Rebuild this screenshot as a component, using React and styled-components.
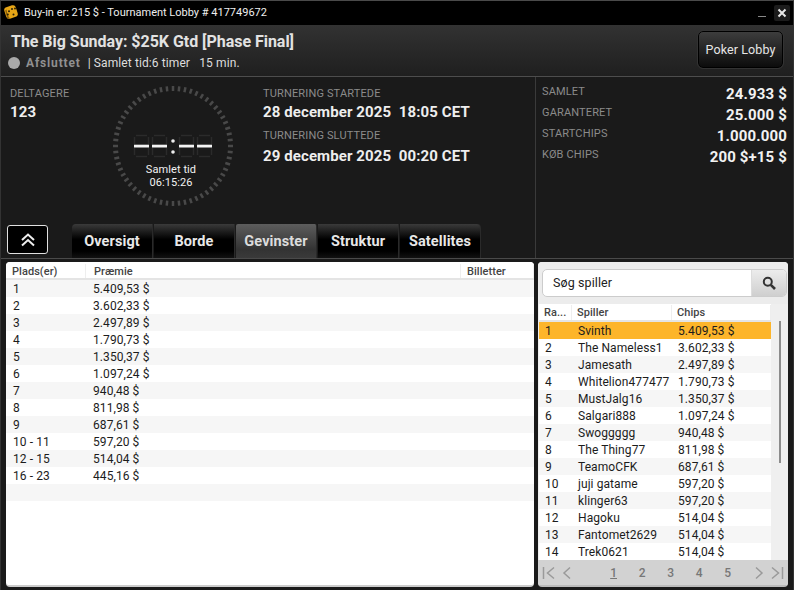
import React from 'react';
import styled, { createGlobalStyle } from 'styled-components';

const Global = createGlobalStyle`
  html, body { margin: 0; padding: 0; background: #1a1a1a; }
  body { font-family: Roboto, "Liberation Sans", sans-serif; }
  * { box-sizing: border-box; }
`;

const Win = styled.div`
  width: 794px; height: 590px; overflow: hidden; display: flex; flex-direction: column;
  background: #1a1a1a; border-top: 1px solid #4a4a4a; border-left: 1px solid #333; border-right: 1px solid #333;
`;
const TitleBar = styled.div`
  height: 24px; background: #000; display: flex; align-items: center; padding: 0 3px 2px 2px; flex: none;
`;
const TitleText = styled.div`
  color: #eee; font-size: 11px; margin-left: 5px; flex: 1;
`;
const MinBtn = styled.div`
  width: 8px; height: 1px; background: #888; margin-right: 8px; margin-top: 8px;
`;
const CloseBtn = styled.div`
  width: 16px; height: 16px; margin-top: 2px; background: #1c1c1c; border-radius: 2px; display: flex; align-items: center; justify-content: center;
`;
const Header = styled.div`
  height: 52px; flex: none; display: flex; justify-content: space-between; padding: 6px 10px 0 7px;
  background: linear-gradient(#323232, #1f1f1f); border-bottom: 1px solid #4d4d4d;
`;
const HeadLeft = styled.div`
  padding-top: 1px;
`;
const HeadTitle = styled.div`
  color: #e2e2e2; font-size: 16px; font-weight: 700; line-height: 19px; letter-spacing: -0.03px; margin-left: 3px;
`;
const HeadSub = styled.div`
  display: flex; align-items: center; height: 16px; margin-top: 4px; color: #ddd; font-size: 12px; letter-spacing: 0.1px; white-space: pre;
`;
const StatusDot = styled.span`
  width: 12px; height: 12px; border-radius: 50%; background: #a9a9a9; margin-right: 6px;
`;
const StatusText = styled.span`
  color: #909090; font-weight: 700; letter-spacing: 0.85px; margin-right: 7px;
`;
const LobbyBtn = styled.div`
  width: 85px; height: 37px; border-radius: 5px; border: 1px solid #000; outline: 1px solid #333;
  background: linear-gradient(#3d3d3d, #0c0c0c); color: #e6e6e6; font-size: 12.5px; letter-spacing: 0.1px;
  display: flex; align-items: center; justify-content: center;
`;
const Info = styled.div`
  height: 182px; flex: none; display: flex; border-bottom: 1px solid #4a4a4a;
`;
const InfoLeft = styled.div`
  width: 535px; display: flex; flex-direction: column; border-right: 1px solid #3a3a3a; justify-content: space-between;
`;
const InfoTop = styled.div`
  display: flex; padding: 7px 0 0 9px;
`;
const Participants = styled.div`
  width: 102px; padding-top: 2px;
`;
const Label = styled.div`
  color: #8b8b8b; font-size: 11px; line-height: 15px; letter-spacing: 0.15px; white-space: nowrap;
`;
const TotalLabel = styled(Label)`
  margin-top: 1px;
`;
const BigValue = styled.div`
  color: #eee; font-size: 15px; font-weight: 700; line-height: 20px; margin-top: ${p => p.$mt ?? 1}px; white-space: pre; letter-spacing: 0.1px;
`;
const ClockBox = styled.div`
  position: relative; width: 122px; height: 122px; margin-top: 1px;
`;
const ClockLabel = styled.div`
  position: absolute; left: 0; right: 4px; top: 78px; text-align: center; color: #f2f2f2; font-size: 11px; line-height: 13px; letter-spacing: 0.08px;
`;
const Dates = styled.div`
  margin-left: 29px; padding-top: 2px;
`;
const DateBlock = styled.div`
  margin-bottom: 6px;
`;
const TabRow = styled.div`
  display: flex; align-items: flex-end; padding-left: 6px; height: 34px;
`;
const Toggle = styled.div`
  width: 41px; height: 29px; margin-bottom: 4px; margin-right: 24px; border: 1px solid #e0e0e0; border-radius: 3px; background: #000;
  display: flex; align-items: center; justify-content: center;
`;
const Tabs = styled.div`
  display: flex; gap: 1px;
`;
const Tab = styled.div`
  width: ${p => p.$w}px; height: 34px; border-radius: ${p => p.$r || '4px 0 0 0'};
  background: ${p => p.$active ? 'linear-gradient(#5d5d5d, #333 75%, #3a3a3a)' : 'linear-gradient(#3a3a3a, #000 45%, #000 80%, #111)'};
  color: ${p => p.$active ? '#dcdcdc' : '#e8e8e8'}; font-size: 14.5px; font-weight: 700; letter-spacing: 0.1px;
  display: flex; align-items: center; justify-content: center; border-right: 1px solid #2a2a2a;
`;
const Totals = styled.div`
  flex: 1; padding: 6px 6px 0 6px; display: flex; flex-direction: column;
`;
const TotalRow = styled.div`
  display: flex; justify-content: space-between; height: 21px; align-items: flex-start;
`;
const TotalValue = styled.div`
  color: #f2f2f2; font-size: 15px; font-weight: 700; line-height: 20px; margin-top: 1px; letter-spacing: 0.15px;
`;
const Content = styled.div`
  flex: 1; display: flex; gap: 4px; padding: 3px 5px 3px 5px; min-height: 0;
`;
const LeftPanel = styled.div`
  width: 528px; background: #fff; border-radius: 4px; border-bottom: 2px solid #ccc; overflow: hidden;
`;
const RightPanel = styled.div`
  width: 250px; background: #efefef; border-radius: 4px; display: flex; flex-direction: column; overflow: hidden; border-bottom: 2px solid #bbb;
`;
const HeadRow = styled.div`
  display: flex; height: 18px; padding-top: ${p => p.$top ?? 1}px; background: #fff; border-bottom: 2px solid #e4e4e4; font-size: 11px; font-weight: 500; color: #444; letter-spacing: 0.05px;
`;
const HeadCell = styled.div`
  width: ${p => p.$w}px; ${p => p.$grow ? 'flex: 1;' : ''} padding-left: ${p => p.$pad || 6}px; line-height: 15px; border-right: 1px solid #eee;
  white-space: nowrap; overflow: hidden;
`;
const Row = styled.div`
  display: flex; height: 17px; align-items: center; font-size: 12px; color: #1c1c1c; letter-spacing: 0.08px;
  background: ${p => p.$active ? '#fdb52a' : p.$alt ? '#f6f6f6' : '#fff'};
`;
const Cell = styled.div`
  width: ${p => p.$w}px; padding-left: ${p => p.$pad || 7}px; white-space: nowrap;
`;
const SearchArea = styled.div`
  height: 42px; flex: none; padding: 7px 1px 0 4px; background: #ececec;
`;
const SearchBox = styled.div`
  height: 28px; display: flex; background: #fff; border: 1px solid #ccc; border-radius: 5px; overflow: hidden;
`;
const SearchInput = styled.div`
  flex: 1; font-size: 12.5px; color: #222; padding-left: 10px; line-height: 26px; letter-spacing: 0.1px;
`;
const SearchBtn = styled.div`
  width: 35px; background: linear-gradient(#ececec, #cfcfcf); border-left: 1px solid #ddd; display: flex; align-items: center; justify-content: center;
`;
const ListWrap = styled.div`
  flex: 1; display: flex; min-height: 0;
`;
const List = styled.div`
  width: 232px; margin-left: 1px; overflow: hidden;
`;
const ScrollCol = styled.div`
  flex: 1; padding: 17px 0 0 8px;
`;
const Thumb = styled.div`
  width: 2px; height: 142px; background: #8c8c8c;
`;
const Pager = styled.div`
  height: 25px; flex: none; background: #d2d2d2; display: flex; align-items: center; padding: 0 4px;
`;
const PagerIcons = styled.div`
  display: flex; gap: 6px; width: ${p => p.$w}px; justify-content: ${p => p.$end ? 'flex-end' : 'flex-start'};
`;
const Pages = styled.div`
  flex: 1; display: flex; padding-left: 35px;
`;
const PageNum = styled.span`
  width: 28.5px; font-size: 12px; font-weight: 500; color: #777; text-decoration: ${p => p.$on ? 'underline' : 'none'};
`;

const prizes = [['1','5.409,53 $'],['2','3.602,33 $'],['3','2.497,89 $'],['4','1.790,73 $'],['5','1.350,37 $'],['6','1.097,24 $'],['7','940,48 $'],['8','811,98 $'],['9','687,61 $'],['10 - 11','597,20 $'],['12 - 15','514,04 $'],['16 - 23','445,16 $'],['','']];
const players = [['1','Svinth','5.409,53 $'],['2','The Nameless1','3.602,33 $'],['3','Jamesath','2.497,89 $'],['4','Whitelion477477','1.790,73 $'],['5','MustJalg16','1.350,37 $'],['6','Salgari888','1.097,24 $'],['7','Swoggggg','940,48 $'],['8','The Thing77','811,98 $'],['9','TeamoCFK','687,61 $'],['10','juji gatame','597,20 $'],['11','klinger63','597,20 $'],['12','Hagoku','514,04 $'],['13','Fantomet2629','514,04 $'],['14','Trek0621','514,04 $']];
const totals = [['SAMLET','24.933 $'],['GARANTERET','25.000 $'],['STARTCHIPS','1.000.000'],['KØB CHIPS','200 $+15 $']];

const Logo = () => (
  <svg width="16" height="16" viewBox="0 0 16 16">
    <rect x="2" y="2" width="12" height="12" rx="3" fill="#e6a516" transform="rotate(-18 8 8)" />
    <path d="M2.2 6.5 L4 13.5 Q4.6 15 6 14.6 L7 14.3 Q4.5 12 3.5 5.5Z" fill="#8a5f0a" />
    <circle cx="4.8" cy="10.5" r="1" fill="#2a2108" /><circle cx="6" cy="7.2" r="1" fill="#2a2108" />
    <circle cx="9" cy="5" r="1" fill="#2a2108" /><circle cx="12" cy="4.6" r="1" fill="#2a2108" />
    <circle cx="10.5" cy="10.5" r="1" fill="#2a2108" />
  </svg>
);

const Digit = ({ x }) => (
  <g>
    <path d={`M${x+2} 0.5h11M${x+2} 21.5h11M${x+0.5} 2v7M${x+0.5} 13v7M${x+14.5} 2v7M${x+14.5} 13v7`} stroke="#2b2b2b" strokeWidth="1.5" fill="none" />
    <rect x={x} y="9.7" width="15" height="2.8" fill="#f4f4f4" />
  </g>
);

const Clock = () => {
  const ticks = Array.from({ length: 60 }, (_, i) => i * 6);
  return (
    <ClockBox>
      <svg width="122" height="122" viewBox="0 0 122 122">
        {ticks.map(a => (
          <rect key={a} x="59.75" y="1" width="2.5" height="5" fill="#494949" transform={`rotate(${a} 61 61)`} />
        ))}
        <g transform="translate(0 50)">
          <Digit x={22} /><Digit x={40} /><Digit x={67} /><Digit x={85} />
          <circle cx="61" cy="6" r="1.8" fill="#eee" /><circle cx="61" cy="17" r="1.8" fill="#eee" />
        </g>
      </svg>
      <ClockLabel>Samlet tid<br />06:15:26</ClockLabel>
    </ClockBox>
  );
};

export default function App() {
  return (
    <Win>
      <Global />
      <TitleBar>
        <Logo />
        <TitleText>Buy-in er: 215 $ - Tournament Lobby # 417749672</TitleText>
        <MinBtn />
        <CloseBtn>
          <svg width="10" height="10" viewBox="0 0 10 10"><path d="M1.5 1.5l7 7M8.5 1.5l-7 7" stroke="#e8e8e8" strokeWidth="2" /></svg>
        </CloseBtn>
      </TitleBar>
      <Header>
        <HeadLeft>
          <HeadTitle>The Big Sunday: $25K Gtd [Phase Final]</HeadTitle>
          <HeadSub><StatusDot /><StatusText>Afsluttet</StatusText>| Samlet tid:6 timer   15 min.</HeadSub>
        </HeadLeft>
        <LobbyBtn>Poker Lobby</LobbyBtn>
      </Header>
      <Info>
        <InfoLeft>
          <InfoTop>
            <Participants>
              <Label>DELTAGERE</Label>
              <BigValue>123</BigValue>
            </Participants>
            <Clock />
            <Dates>
              <DateBlock>
                <Label>TURNERING STARTEDE</Label>
                <BigValue>28 december 2025  18:05 CET</BigValue>
              </DateBlock>
              <DateBlock>
                <Label>TURNERING SLUTTEDE</Label>
                <BigValue $mt={3}>29 december 2025  00:20 CET</BigValue>
              </DateBlock>
            </Dates>
          </InfoTop>
          <TabRow>
            <Toggle>
              <svg width="16" height="14" viewBox="0 0 16 14" fill="none" stroke="#eee" strokeWidth="2"><path d="M2 7l6-5.5L14 7M2 12.5l6-5.5 6 5.5" /></svg>
            </Toggle>
            <Tabs>
              <Tab $w={81}>Oversigt</Tab>
              <Tab $w={81} $r="0">Borde</Tab>
              <Tab $w={81} $r="2px 2px 0 0" $active>Gevinster</Tab>
              <Tab $w={81} $r="0">Struktur</Tab>
              <Tab $w={81} $r="0 4px 0 0">Satellites</Tab>
            </Tabs>
          </TabRow>
        </InfoLeft>
        <Totals>
          {totals.map(([k, v]) => (
            <TotalRow key={k}><TotalLabel>{k}</TotalLabel><TotalValue>{v}</TotalValue></TotalRow>
          ))}
        </Totals>
      </Info>
      <Content>
        <LeftPanel>
          <HeadRow $top={2}>
            <HeadCell $w={80}>Plads(er)</HeadCell>
            <HeadCell $w={375} $pad={8}>Præmie</HeadCell>
            <HeadCell $grow $pad={6}>Billetter</HeadCell>
          </HeadRow>
          {prizes.map(([a, b], i) => (
            <Row key={i} $alt={i % 2 === 0}><Cell $w={81}>{a}</Cell><Cell $w={300} $pad={6}>{b}</Cell></Row>
          ))}
        </LeftPanel>
        <RightPanel>
          <SearchArea>
            <SearchBox>
              <SearchInput>Søg spiller</SearchInput>
              <SearchBtn>
                <svg width="14" height="14" viewBox="0 0 14 14" fill="none" stroke="#333"><circle cx="5.8" cy="5.8" r="4" strokeWidth="2" /><path d="M8.8 8.8L13 13" strokeWidth="2.6" /></svg>
              </SearchBtn>
            </SearchBox>
          </SearchArea>
          <ListWrap>
            <List>
              <HeadRow>
                <HeadCell $w={33} $pad={5}>Ra...</HeadCell>
                <HeadCell $w={100} $pad={5}>Spiller</HeadCell>
                <HeadCell $grow $pad={5}>Chips</HeadCell>
              </HeadRow>
              {players.map(([r, n, c], i) => (
                <Row key={r} $active={i === 0} $alt={i % 2 === 0}>
                  <Cell $w={33} $pad={6}>{r}</Cell><Cell $w={100} $pad={6}>{n}</Cell><Cell $w={99} $pad={6}>{c}</Cell>
                </Row>
              ))}
            </List>
            <ScrollCol><Thumb /></ScrollCol>
          </ListWrap>
          <Pager>
            <PagerIcons $w={36}>
              <svg width="14" height="14" viewBox="0 0 14 14" fill="none" stroke="#9a9a9a" strokeWidth="1.5"><path d="M1.5 1v12M12 1.5L5.5 7l6.5 5.5" /></svg>
              <svg width="10" height="14" viewBox="0 0 10 14" fill="none" stroke="#9a9a9a" strokeWidth="1.5"><path d="M8 1.5L2 7l6 5.5" /></svg>
            </PagerIcons>
            <Pages>
              {[1, 2, 3, 4, 5].map(n => <PageNum key={n} $on={n === 1}>{n}</PageNum>)}
            </Pages>
            <PagerIcons $w={34} $end>
              <svg width="10" height="14" viewBox="0 0 10 14" fill="none" stroke="#9a9a9a" strokeWidth="1.5"><path d="M2 1.5L8 7l-6 5.5" /></svg>
              <svg width="14" height="14" viewBox="0 0 14 14" fill="none" stroke="#9a9a9a" strokeWidth="1.5"><path d="M12.5 1v12M2 1.5L8.5 7 2 12.5" /></svg>
            </PagerIcons>
          </Pager>
        </RightPanel>
      </Content>
    </Win>
  );
}
